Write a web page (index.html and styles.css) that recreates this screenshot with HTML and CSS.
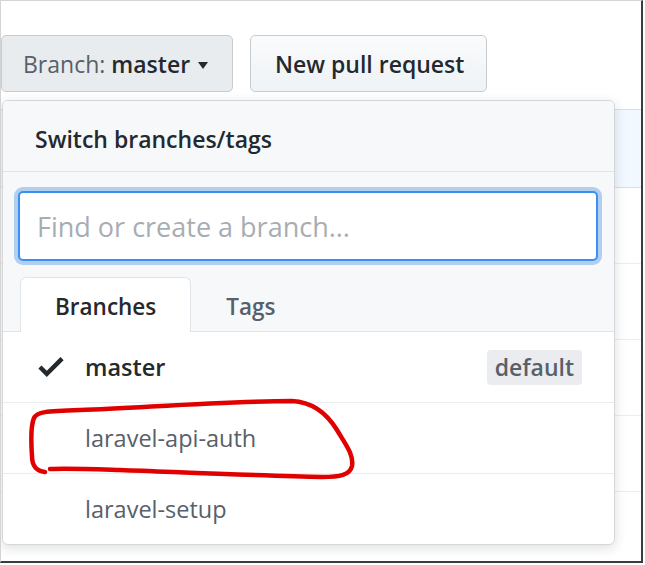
FILE: index.html
```html
<!DOCTYPE html>
<html lang="en">

<head>
    <meta charset="UTF-8">
    <title>Switch branches</title>
    <link rel="stylesheet" href="styles.css">
</head>

<body>
    <div class="frame">
        <div class="toolbar">
            <button class="btn btn-branch">
                <span class="btn-label">Branch:&nbsp;</span><span class="branch-name">master</span>
                <span class="caret"></span>
            </button>
            <button class="btn btn-pull">New pull request</button>
        </div>

        <!-- page content behind the dropdown -->
        <div class="commit-tease"></div>
        <div class="file-row"></div>
        <div class="file-row"></div>
        <div class="file-row"></div>
        <div class="file-row"></div>

        <div class="select-menu">
            <div class="select-menu-header">Switch branches/tags</div>
            <div class="select-menu-filters">
                <div class="filter-input">Find or create a branch...</div>
            </div>
            <div class="select-menu-tabs">
                <div class="tab selected">Branches</div>
                <div class="tab">Tags</div>
            </div>
            <div class="select-menu-list">
                <div class="item selected">
                    <svg class="check" viewBox="0 3.5 12 9.5" width="26" height="20">
                        <path d="M12 5l-8 8-4-4 1.5-1.5L4 10l6.5-6.5L12 5z" fill="#24292e" />
                    </svg>
                    <span class="item-name">master</span>
                    <span class="label">default</span>
                </div>
                <div class="item">
                    <span class="item-name">laravel-api-auth</span>
                </div>
                <div class="item">
                    <span class="item-name">laravel-setup</span>
                </div>
            </div>
        </div>

        <!-- red pen mark -->
        <svg class="mark" width="645" height="565" viewBox="0 0 645 565">
            <path d="M45 472 C37 471 32 467 32 456 C31 442 31 425 34 418 C37 412 45 411 80 410 C150 407 230 401 292 401 C312 402 326 412 337 430 C346 445 354 455 352 466 C350 475 340 477 322 477 C270 476 200 473 120 470 C90 469 65 468 50 469"
                fill="none" stroke="#e00000" stroke-width="4.5" stroke-linecap="round" />
        </svg>
    </div>
</body>

</html>
```

FILE: styles.css
```css
body {
    margin: 0;
    padding: 0;
    background-color: white;
    font-family: "Open Sans", "Noto Sans", sans-serif;
}

.frame {
    position: relative;
    width: 643px;
    height: 563px;
    box-sizing: border-box;
    border-top: 1px solid #d4d4d4;
    border-left: 1px solid #d4d4d4;
    border-right: 2px solid #3c3c3c;
    border-bottom: 2px solid #3c3c3c;
    overflow: hidden;
    background-color: white;
}

.toolbar {
    display: flex;
    gap: 17px;
    padding-top: 34px;
}

.btn {
    height: 57px;
    box-sizing: border-box;
    border: 1px solid #c8cccf;
    border-radius: 5px;
    font-family: inherit;
    font-size: 23px;
    color: #24292e;
    background: linear-gradient(#fafbfc, #eff3f6 90%);
    display: flex;
    align-items: center;
}

.btn-branch {
    width: 232px;
    padding: 0 0 0 21px;
    background: #e9ecef;
}

.btn-label {
    color: #586069;
}

.branch-name {
    font-weight: 600;
}

.caret {
    margin-left: 8px;
    margin-top: 3px;
    border-top: 7px solid #24292e;
    border-left: 5.5px solid transparent;
    border-right: 5.5px solid transparent;
}

.btn-pull {
    width: 237px;
    padding: 0 0 0 24px;
    font-weight: 600;
}

.commit-tease {
    margin-top: 17px;
    height: 77px;
    background-color: #f1f8ff;
    border-top: 1px solid #c8e1ff;
    border-bottom: 1px solid #c8e1ff;
}

.file-row {
    height: 75px;
    border-bottom: 1px solid #eaecef;
}

.select-menu {
    position: absolute;
    top: 99px;
    left: 1px;
    width: 613px;
    height: 445px;
    box-sizing: border-box;
    border: 1px solid #d4d6d9;
    border-radius: 6px;
    box-shadow: 0 3px 12px rgba(27, 31, 35, 0.15);
    background-color: white;
    overflow: hidden;
}

.select-menu-header {
    height: 71px;
    box-sizing: border-box;
    padding: 5px 0 0 32px;
    border-bottom: 1px solid #e1e4e8;
    background-color: #f6f8fa;
    display: flex;
    align-items: center;
    font-size: 23px;
    font-weight: 600;
    color: #24292e;
}

.select-menu-filters {
    background-color: #f6f8fa;
    padding: 19px 16px 16px 15px;
}

.filter-input {
    height: 70px;
    box-sizing: border-box;
    border: 2px solid #3a8ff5;
    border-radius: 5px;
    box-shadow: 0 0 0 4px rgba(3, 102, 214, 0.28);
    background-color: white;
    padding-left: 17px;
    display: flex;
    align-items: center;
    font-size: 27px;
    color: #a7adb3;
}

.select-menu-tabs {
    background-color: #f6f8fa;
    display: flex;
    padding-left: 17px;
    border-bottom: 1px solid #e1e4e8;
}

.tab {
    height: 54px;
    box-sizing: border-box;
    padding: 3px 34px 0;
    display: flex;
    align-items: center;
    font-size: 22.5px;
    font-weight: 600;
    color: #586069;
    border: 1px solid transparent;
    border-bottom: none;
    border-radius: 6px 6px 0 0;
    margin-bottom: -1px;
}

.tab.selected {
    color: #24292e;
    background-color: white;
    border-color: #e1e4e8;
    height: 55px;
}

.item {
    height: 70px;
    border-bottom: 1px solid #eaecef;
    display: flex;
    align-items: center;
    padding-left: 82px;
    padding-right: 32px;
    font-size: 23.5px;
    color: #586069;
}

.item.selected {
    padding-left: 35px;
    color: #24292e;
}

.check {
    margin-right: 21px;
}

.item.selected .item-name {
    font-weight: 600;
}

.label {
    margin-left: auto;
    height: 35px;
    padding: 0 8px;
    border-radius: 4px;
    background-color: #eaecef;
    color: #586069;
    font-size: 23px;
    font-weight: 600;
    display: flex;
    align-items: center;
}

.mark {
    position: absolute;
    left: -1px;
    top: -1px;
    pointer-events: none;
}
```
